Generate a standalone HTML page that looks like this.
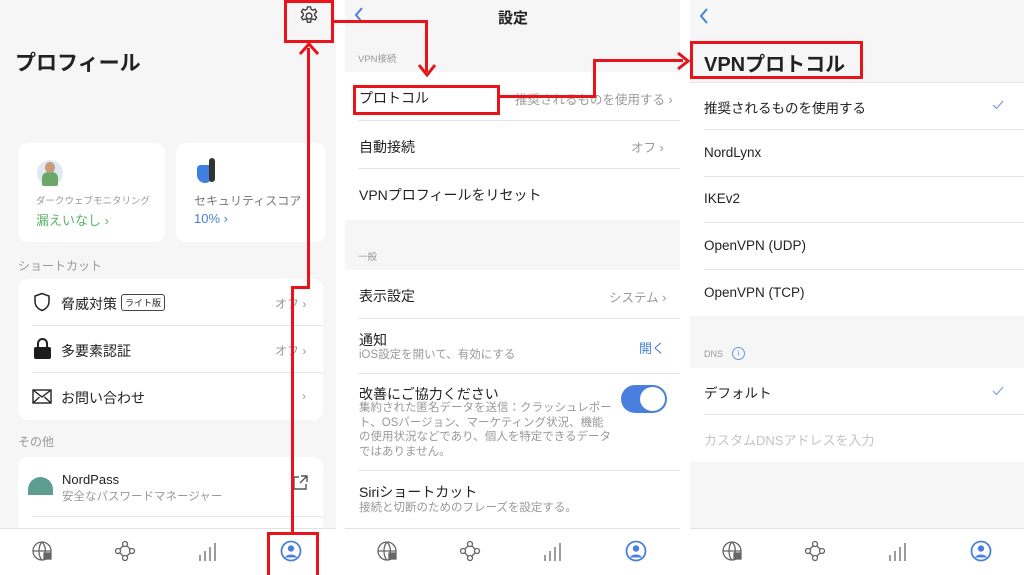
<!DOCTYPE html>
<html><head><meta charset="utf-8"><style>
*{margin:0;padding:0;box-sizing:border-box}
body{width:1024px;height:575px;position:relative;overflow:hidden;background:#fff;font-family:"Liberation Sans","Noto Sans CJK JP",sans-serif;color:#222}
.p{position:absolute;top:0;height:575px;background:#f6f6f7;overflow:hidden}
.a{position:absolute}
.t{position:absolute;white-space:nowrap}
.w{position:absolute;background:#fff}
.ln{position:absolute;height:1px;background:#e6e6e8}
.tab{position:absolute;left:0;right:0;top:528px;height:47px;background:#fff;border-top:1px solid #e2e2e2}
.g{color:#999}
.r{position:absolute;background:#e8141a}
.rb{position:absolute;border:3px solid #e8141a}
</style></head><body>

<!-- Panel 1 -->
<div class="p" style="left:0;width:336px">
  <div class="a" style="left:298px;top:5px"><svg width="22" height="22" viewBox="0 0 24 24" fill="none" stroke="#333" stroke-width="1.4"><path d="M10.3 2h3.4l.5 2.6 1.9 1 2.5-1 1.7 2.9-2 1.8v2.2l2 1.8-1.7 2.9-2.5-1-1.9 1-.5 2.6h-3.4l-.5-2.6-1.9-1-2.5 1-1.7-2.9 2-1.8V9.3l-2-1.8 1.7-2.9 2.5 1 1.9-1z"/><circle cx="12" cy="12" r="3.2"/></svg></div>
  <div class="t" style="left:15px;top:47px;font-size:21px;font-weight:bold">プロフィール</div>
  <div class="w" style="left:18px;top:143px;width:147px;height:99px;border-radius:10px"></div>
  <div class="w" style="left:176px;top:143px;width:150px;height:99px;border-radius:10px"></div>
  <div class="a" style="left:37px;top:160px;width:26px;height:26px;border-radius:50%;background:#dfe9f3"></div>
  <div class="a" style="left:42px;top:172px;width:16px;height:14px;border-radius:6px 6px 2px 2px;background:#6aa86a"></div>
  <div class="a" style="left:45px;top:162px;width:10px;height:11px;border-radius:50%;background:#c99b7a"></div>
  <div class="a" style="left:197px;top:165px;width:16px;height:18px;border-radius:4px 4px 9px 9px;background:#3e7fe0"></div>
  <div class="a" style="left:209px;top:158px;width:6px;height:24px;background:#333;border-radius:3px"></div>
  <div class="t g" style="left:36px;top:193px;font-size:9.5px">ダークウェブモニタリング</div>
  <div class="t" style="left:36px;top:210px;font-size:13px;color:#5bb36a">漏えいなし ›</div>
  <div class="t" style="left:194px;top:192px;font-size:12px;color:#777">セキュリティスコア</div>
  <div class="t" style="left:194px;top:211px;font-size:13px;color:#4a7fd8">10% ›</div>
  <div class="t g" style="left:18px;top:257px;font-size:12px">ショートカット</div>
  <div class="w" style="left:18px;top:279px;width:305px;height:141px;border-radius:10px"></div>
  <div class="ln" style="left:32px;top:325px;width:291px"></div>
  <div class="ln" style="left:32px;top:372px;width:291px"></div>
  <div class="a" style="left:33px;top:292px"><svg width="18" height="20" viewBox="0 0 18 20" fill="none" stroke="#222" stroke-width="1.5"><path d="M9 1.5L2 4v5.5c0 4.5 3.2 7.7 7 9 3.8-1.3 7-4.5 7-9V4z"/></svg></div>
  <div class="t" style="left:61px;top:294px;font-size:14px">脅威対策</div>
  <div class="t" style="left:121px;top:294px;font-size:9px;border:1px solid #444;border-radius:3px;padding:1px 3px">ライト版</div>
  <div class="t g" style="left:275px;top:295px;font-size:12px">オフ ›</div>
  <div class="a" style="left:34px;top:338px;width:17px;height:21px"><div class="a" style="left:3px;top:0;width:11px;height:11px;border:2px solid #222;border-bottom:none;border-radius:6px 6px 0 0"></div><div class="a" style="left:0;top:9px;width:17px;height:12px;background:#1c1c1c;border-radius:2px"></div></div>
  <div class="t" style="left:61px;top:341px;font-size:14px">多要素認証</div>
  <div class="t g" style="left:275px;top:342px;font-size:12px">オフ ›</div>
  <div class="a" style="left:32px;top:389px"><svg width="20" height="15" viewBox="0 0 20 15" fill="none" stroke="#222" stroke-width="1.4"><rect x="1" y="1" width="18" height="13"/><path d="M1 1l9 7 9-7M1 14l6.5-6M19 14l-6.5-6"/></svg></div>
  <div class="t" style="left:61px;top:388px;font-size:14px">お問い合わせ</div>
  <div class="t g" style="left:302px;top:389px;font-size:12px">›</div>
  <div class="t g" style="left:18px;top:433px;font-size:12px">その他</div>
  <div class="w" style="left:18px;top:457px;width:305px;height:80px;border-radius:10px"></div>
  <div class="ln" style="left:32px;top:516px;width:291px"></div>
  <div class="a" style="left:28px;top:477px;width:25px;height:18px;border-radius:13px 13px 0 0;background:#5e9e92"></div>
  <div class="t" style="left:62px;top:472px;font-size:13px">NordPass</div>
  <div class="t g" style="left:62px;top:488px;font-size:11.5px">安全なパスワードマネージャー</div>
  <div class="a" style="left:293px;top:475px"><svg width="15" height="15" viewBox="0 0 15 15" fill="none" stroke="#555" stroke-width="1.4"><path d="M8 1h6v6M14 1L7 8M6 2H1v12h12V9"/></svg></div>
  <div class="tab"></div>
</div>

<!-- Panel 2 -->
<div class="p" style="left:345px;width:335px">
  <svg class="a" style="left:8px;top:6px" width="12" height="18"><path d="M9 2L3 9l6 7" fill="none" stroke="#4a7fd8" stroke-width="2"/></svg>
  <div class="t" style="left:153px;top:7px;font-size:15px;font-weight:bold">設定</div>
  <div class="t g" style="left:13px;top:51px;font-size:9.5px">VPN接続</div>
  <div class="w" style="left:0;top:72px;width:335px;height:148px"></div>
  <div class="ln" style="left:13px;top:120px;width:322px"></div>
  <div class="ln" style="left:13px;top:168px;width:322px"></div>
  <div class="t" style="left:14px;top:88px;font-size:14px">プロトコル</div>
  <div class="t g" style="left:170px;top:89px;font-size:12.5px">推奨されるものを使用する ›</div>
  <div class="t" style="left:14px;top:137px;font-size:14px">自動接続</div>
  <div class="t g" style="left:286px;top:137px;font-size:12.5px">オフ ›</div>
  <div class="t" style="left:14px;top:185px;font-size:14px">VPNプロフィールをリセット</div>
  <div class="t g" style="left:13px;top:249px;font-size:9.5px">一般</div>
  <div class="w" style="left:0;top:270px;width:335px;height:258px"></div>
  <div class="ln" style="left:13px;top:318px;width:322px"></div>
  <div class="ln" style="left:13px;top:373px;width:322px"></div>
  <div class="ln" style="left:13px;top:470px;width:322px"></div>
  <div class="t" style="left:14px;top:286px;font-size:14px">表示設定</div>
  <div class="t g" style="left:264px;top:287px;font-size:12.5px">システム ›</div>
  <div class="t" style="left:14px;top:330px;font-size:14px">通知</div>
  <div class="t g" style="left:14px;top:346px;font-size:11.5px">iOS設定を開いて、有効にする</div>
  <div class="t" style="left:294px;top:338px;font-size:13px;color:#4a7fd8">開く</div>
  <div class="t" style="left:14px;top:384px;font-size:14px">改善にご協力ください</div>
  <div class="a g" style="left:14px;top:401px;white-space:nowrap;font-size:11.5px;line-height:14.5px">集約された匿名データを送信：クラッシュレポー<br>ト、OSバージョン、マーケティング状況、機能<br>の使用状況などであり、個人を特定できるデータ<br>ではありません。</div>
  <div class="a" style="left:276px;top:385px;width:46px;height:28px;border-radius:14px;background:#4a7fe0"></div>
  <div class="a" style="left:295px;top:387px;width:25px;height:24px;border-radius:50%;background:#fff"></div>
  <div class="t" style="left:14px;top:482px;font-size:14px">Siriショートカット</div>
  <div class="t g" style="left:14px;top:499px;font-size:11.5px">接続と切断のためのフレーズを設定する。</div>
  <div class="tab"></div>
</div>

<!-- Panel 3 -->
<div class="p" style="left:690px;width:334px">
  <svg class="a" style="left:8px;top:7px" width="12" height="18"><path d="M9 2L3 9l6 7" fill="none" stroke="#4a7fd8" stroke-width="2"/></svg>
  <div class="t" style="left:14px;top:48px;font-size:20px;font-weight:bold">VPNプロトコル</div>
  <div class="w" style="left:0;top:83px;width:334px;height:233px"></div>
  <div class="ln" style="left:0;top:82px;width:334px"></div>
  <div class="ln" style="left:14px;top:129px;width:320px"></div>
  <div class="ln" style="left:14px;top:176px;width:320px"></div>
  <div class="ln" style="left:14px;top:222px;width:320px"></div>
  <div class="ln" style="left:14px;top:269px;width:320px"></div>
  <div class="t" style="left:14px;top:97px;font-size:13.5px">推奨されるものを使用する</div>
  <svg class="a" style="left:302px;top:100px" width="12" height="10"><path d="M1 5l3.5 3.5L11 1" fill="none" stroke="#7a9ee0" stroke-width="1.2"/></svg>
  <div class="t" style="left:14px;top:145px;font-size:13.5px">NordLynx</div>
  <div class="t" style="left:14px;top:191px;font-size:13.5px">IKEv2</div>
  <div class="t" style="left:14px;top:238px;font-size:13.5px">OpenVPN (UDP)</div>
  <div class="t" style="left:14px;top:285px;font-size:13.5px">OpenVPN (TCP)</div>
  <div class="t g" style="left:14px;top:349px;font-size:9px">DNS</div>
  <div class="a" style="left:42px;top:347px;width:13px;height:13px;border:1.2px solid #6a95e0;border-radius:50%;font-size:8px;color:#6a95e0;text-align:center;line-height:11px">i</div>
  <div class="w" style="left:0;top:368px;width:334px;height:94px"></div>
  <div class="ln" style="left:14px;top:414px;width:320px"></div>
  <div class="t" style="left:14px;top:382px;font-size:13.5px">デフォルト</div>
  <svg class="a" style="left:302px;top:386px" width="12" height="10"><path d="M1 5l3.5 3.5L11 1" fill="none" stroke="#7a9ee0" stroke-width="1.2"/></svg>
  <div class="t" style="left:14px;top:430px;font-size:13px;color:#c4c4c4">カスタムDNSアドレスを入力</div>
  <div class="tab"></div>
</div>

<!-- tab icons -->
<svg class="a" style="left:0;top:528px" width="1024" height="47">
 <g id="ti" fill="none" stroke="#666" stroke-width="1.3">
  <g transform="translate(42,23)"><circle r="9"/><path d="M-9 0h18M0-9c-4 4-4 14 0 18M0-9c4 4 4 10 2 14"/><rect x="2" y="2" width="7" height="6" fill="#666"/></g>
  <g transform="translate(125,23)"><circle cx="0" cy="-7" r="2.5"/><circle cx="-7" cy="0" r="2.5"/><circle cx="7" cy="0" r="2.5"/><circle cx="0" cy="7" r="2.5"/><path d="M-2-5l-3 3M2-5l3 3M-5 2l3 3M5 2l-3 3"/></g>
  <g transform="translate(208,23)"><path d="M-8 4v6M-3 0v10M2-4v14M7-8v18"/></g>
 </g>
 <g transform="translate(291,23)"><circle r="9.5" fill="none" stroke="#4a7fe0" stroke-width="1.8"/><circle cy="-2.5" r="3.2" fill="#4a7fe0"/><path d="M-6 6.5c2-4 10-4 12 0" fill="#4a7fe0"/></g>
 <use href="#ti" x="345"/><use href="#ti" x="690"/>
 <g transform="translate(636,23)"><circle r="9.5" fill="none" stroke="#4a7fe0" stroke-width="1.8"/><circle cy="-2.5" r="3.2" fill="#4a7fe0"/><path d="M-6 6.5c2-4 10-4 12 0" fill="#4a7fe0"/></g>
 <g transform="translate(981,23)"><circle r="9.5" fill="none" stroke="#4a7fe0" stroke-width="1.8"/><circle cy="-2.5" r="3.2" fill="#4a7fe0"/><path d="M-6 6.5c2-4 10-4 12 0" fill="#4a7fe0"/></g>
</svg>

<!-- red annotations -->
<div class="rb" style="left:284px;top:0;width:50px;height:43px"></div>
<div class="rb" style="left:267px;top:532px;width:52px;height:43px;border-bottom:none"></div>
<div class="r" style="left:291px;top:287px;width:3px;height:246px"></div>
<div class="r" style="left:291px;top:286px;width:19px;height:3px"></div>
<div class="r" style="left:307px;top:48px;width:3px;height:241px"></div>
<svg class="a" style="left:298px;top:42px" width="22" height="14"><path d="M2 12L11 2l9 10" fill="none" stroke="#e8141a" stroke-width="3"/></svg>
<div class="r" style="left:334px;top:20px;width:94px;height:3px"></div>
<div class="r" style="left:425px;top:20px;width:3px;height:52px"></div>
<svg class="a" style="left:417px;top:63px" width="20" height="14"><path d="M2 2l8 10 8-10" fill="none" stroke="#e8141a" stroke-width="3"/></svg>
<div class="rb" style="left:353px;top:85px;width:147px;height:30px"></div>
<div class="r" style="left:500px;top:95px;width:96px;height:3px"></div>
<div class="r" style="left:593px;top:59px;width:3px;height:39px"></div>
<div class="r" style="left:593px;top:59px;width:90px;height:3px"></div>
<svg class="a" style="left:676px;top:51px" width="14" height="20"><path d="M2 2l10 8-10 8" fill="none" stroke="#e8141a" stroke-width="3"/></svg>
<div class="rb" style="left:690px;top:41px;width:173px;height:38px"></div>
</body></html>
